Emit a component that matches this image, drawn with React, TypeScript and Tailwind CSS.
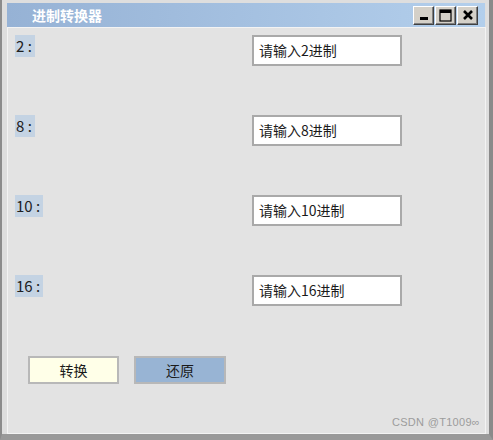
import React from "react";

const font = "font-['Microsoft_YaHei','Noto_Sans_CJK_SC',sans-serif]";

function TitleButton({ children }: { children: React.ReactNode }) {
  return (
    <div className="w-[21px] h-[19px] bg-[#d4d0c8] border border-t-white border-l-white border-r-[#404040] border-b-[#404040] flex items-center justify-center shadow-[inset_-1px_-1px_0_#808080]">
      {children}
    </div>
  );
}

function Row({ label, hint }: { label: string; hint: string }) {
  return (
    <div className="h-[80px] flex items-start">
      <div className="w-[244px] pl-[7px]">
        <div className={`inline-flex h-[22px] items-center bg-[#c4d3e3] pl-[1px] pr-[3px] text-[15px] leading-none text-[#202020] ${font}`}>
          {label}
        </div>
      </div>
      <div className={`mt-[1px] w-[150px] h-[31px] border-2 border-[#a9a9a9] bg-white flex items-center pl-[5px] text-[14px] text-[#1a1a1a] ${font}`}>
        {hint}
      </div>
    </div>
  );
}

export default function App() {
  return (
    <div className="w-[493px] h-[440px] bg-[#dedede] border-l-2 border-l-[#8c8c8c] border-r-4 border-r-[#8a8a8a] border-b-[6px] border-b-[#999999] pt-[3px] pl-[5px] pr-[3px] flex flex-col">
      <div className="h-[24px] mr-[1px] bg-gradient-to-r from-[#96b2d5] to-[#b3cfec] flex items-center pl-[25px] pr-[7px]">
        <span className={`text-white text-[14px] font-semibold ${font}`}>进制转换器</span>
        <div className="ml-auto flex gap-[1px]">
          <TitleButton>
            <svg width="12" height="12" viewBox="0 0 12 12">
              <rect x="2" y="8" width="8" height="3" fill="#000" />
            </svg>
          </TitleButton>
          <TitleButton>
            <svg width="13" height="13" viewBox="0 0 13 13">
              <rect x="1" y="1" width="11" height="11" fill="none" stroke="#000" strokeWidth="1.2" />
              <rect x="1" y="1" width="11" height="3" fill="#000" />
            </svg>
          </TitleButton>
          <TitleButton>
            <svg width="12" height="12" viewBox="0 0 12 12">
              <path d="M2 2 L10 10 M10 2 L2 10" stroke="#000" strokeWidth="2.6" />
            </svg>
          </TitleButton>
        </div>
      </div>
      <div className="relative flex-1 bg-[#e3e3e3] border border-[#f3f3f3] pt-[6px] flex flex-col">
        <Row label="2 :" hint="请输入2进制" />
        <Row label="8 :" hint="请输入8进制" />
        <Row label="10 :" hint="请输入10进制" />
        <Row label="16 :" hint="请输入16进制" />
        <div className="mt-[2px] pl-[20px] flex gap-[15px]">
          <div className={`w-[91px] h-[28px] border-2 border-[#b8b8b8] bg-[#ffffe8] flex items-center justify-center text-[14px] text-[#1a1a1a] ${font}`}>
            转换
          </div>
          <div className={`w-[92px] h-[28px] border-2 border-[#b8b8b8] bg-[#98b4d4] flex items-center justify-center text-[14px] text-[#1a1a1a] ${font}`}>
            还原
          </div>
        </div>
        <div className="absolute right-[5px] bottom-[3px] text-[11px] text-[#9c9c9c] font-['Liberation_Sans',sans-serif] tracking-[0.3px]">
          CSDN @T1009∞
        </div>
      </div>
    </div>
  );
}
